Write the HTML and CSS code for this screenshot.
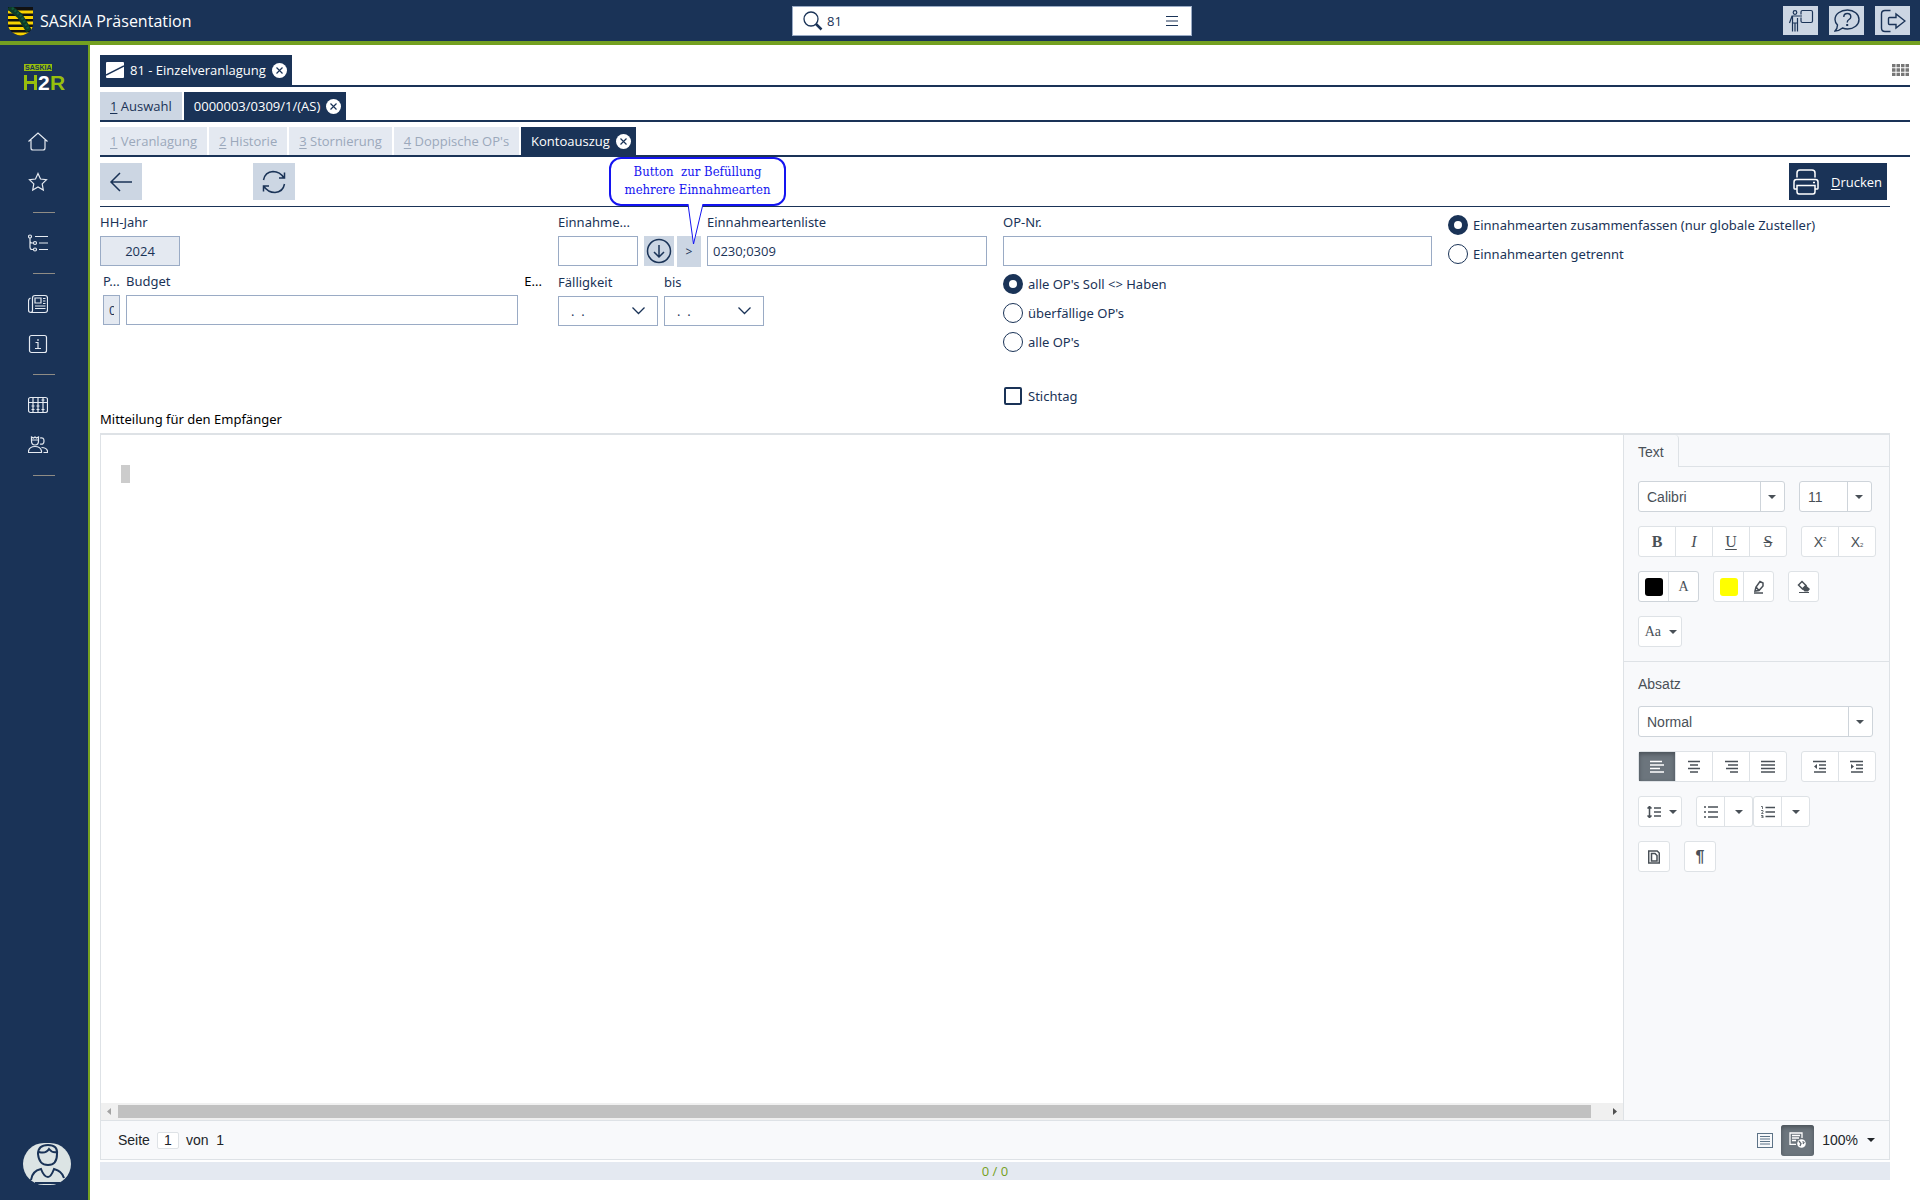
FILE: index.html
```html
<!DOCTYPE html>
<html lang="de">
<head>
    <meta charset="UTF-8">
    <meta name="viewport" content="width=device-width, initial-scale=1.0">
    <title>SASKIA Präsentation</title>
    <link rel="stylesheet" href="styles.css">
</head>
<body>
    <header class="topbar">
        <div class="brand">
            <svg width="25" height="29" viewBox="0 0 25 29">
                <clipPath id="shield"><path d="M0 0h25v17c0 7-6 10-12.500 12C6 27 0 24 0 17z"/></clipPath>
                <g clip-path="url(#shield)">
                    <rect width="25" height="29" fill="#111"/>
                    <path d="M0 5h25M0 10.500h25M0 16h25M0 21.500h25M0 27h25" stroke="#f8d200" stroke-width="2.800"/>
                    <path d="M1 0l11 9 9 15" fill="none" stroke="#0d3a28" stroke-width="6"/>
                    <path d="M4 1l9 8 8 14" fill="none" stroke="#12593a" stroke-width="2.500" stroke-dasharray="2 1.500"/>
                </g>
            </svg>
            <span>SASKIA Präsentation</span>
        </div>
        <form class="search">
            <svg width="20" height="20" viewBox="0 0 20 20" fill="none" stroke="#1a3357">
                <circle cx="8" cy="8" r="7" stroke-width="1.300"/>
                <path d="M13 13l5.500 5.500" stroke-width="2.500"/>
            </svg>
            <input type="text" value="81" aria-label="Suche">
            <button type="button" class="menu" aria-label="Menü">
                <svg width="12" height="12" viewBox="0 0 12 12" stroke="#1a3357"><path d="M0 1.500h12M0 6h12M0 10.500h12"/></svg>
            </button>
        </form>
        <div class="actions">
            <button type="button" aria-label="Präsentation">
                <svg width="26" height="24" viewBox="0 0 26 24" fill="none" stroke="#1a3357" stroke-width="1.200">
                    <circle cx="7" cy="3.500" r="1.800"/>
                    <path d="M1.500 14L4 7h10M4.500 7v15.500M7 14v8.500M9.500 9v13.500M4.500 14h5"/>
                    <path d="M13 5.500V3q0-1.500 1.500-1.500h8.500q1.500 0 1.500 1.500v9q0 1.500-1.500 1.500h-8.500q-1.500 0-1.500-1.500V8.500"/>
                </svg>
            </button>
            <button type="button" aria-label="Hilfe">
                <svg width="26" height="24" viewBox="0 0 26 24" fill="none" stroke="#1a3357" stroke-width="1.400">
                    <path d="M13.500 1C20 1 25 5 25 10.500S20 20 13.500 20q-2.500 0-5-1Q5 22 1 22q2.500-2.500 2.500-6Q1 13.500 1 10.500C1 5 6.500 1 13.500 1z"/>
                    <path d="M9.800 8q0-3.500 3.500-3.500T16.800 8q0 1.500-1.800 2.500t-1.800 3"/>
                    <path d="M13.200 15v2" stroke-width="2"/>
                </svg>
            </button>
            <button type="button" aria-label="Abmelden">
                <svg width="26" height="24" viewBox="0 0 26 24" fill="none" stroke="#1a3357" stroke-width="1.400">
                    <path d="M10.500 1.500H5Q1.500 1.500 1.500 5v14q0 3.500 3.500 3.500h5.500"/>
                    <path d="M9.500 8.500H16V5l9 7-9 7v-3.500H9.500q-1 0-1-1v-5q0-1 1-1z"/>
                </svg>
            </button>
        </div>
    </header>

    <div class="layout">
        <nav class="sidebar">
            <svg class="logo" width="42" height="27" viewBox="0 0 42 27">
                <rect width="28" height="7" fill="#97bf0d"/>
                <text x="1" y="6" class="logo-small">SASKIA</text>
                <path d="M1.500 11v15M1.500 18.500H11M11.500 11v15" stroke="#97bf0d" stroke-width="3" fill="none"/>
                <text x="14" y="26" class="logo-big">2</text>
                <text x="26" y="26" class="logo-big green">R</text>
            </svg>
            <a href="#" aria-label="Start">
                <svg width="20" height="20" viewBox="0 0 20 20"><path d="M.500 9.500L10 1l9.500 8.500M3 8v8q0 2 2 2h10q2 0 2-2V8"/></svg>
            </a>
            <a href="#" aria-label="Favoriten">
                <svg width="20" height="20" viewBox="0 0 20 20"><path d="M10 1.500l2.500 5.500 6 .700-4.300 4.200 1.100 6.100-5.300-3-5.300 3 1.100-6.100L1.500 7.700l6-.700z"/></svg>
            </a>
            <hr>
            <a href="#" aria-label="Baum">
                <svg width="20" height="20" viewBox="0 0 20 20"><circle cx="2" cy="3.500" r="1.500"/><circle cx="7" cy="10" r="1.500"/><circle cx="7" cy="16.500" r="1.500"/><path d="M2 5v9q0 2.500 2 2.500h1.500M2 8q0 2 2 2h1.500M7 3.500h13M11 10h9M11 16.500h9"/></svg>
            </a>
            <hr>
            <a href="#" aria-label="Nachrichten">
                <svg width="20" height="20" viewBox="0 0 20 20"><path d="M4.500 4Q4.500 1.500 7 1.500h10q2.500 0 2.500 2.500v12q0 2.500-2.500 2.500H3Q.500 18.500.500 16V7q0-2 2-3M4.500 4v12.500q0 2-2 2M7 4h6v5H7zM15 4.500h2.500M15 7h2.500M15 9.500h2.500M7 12h10.500M7 14.500h10.500"/></svg>
            </a>
            <a href="#" aria-label="Info">
                <svg width="20" height="20" viewBox="0 0 20 20"><rect x="1.500" y="1.500" width="17" height="17" rx="2"/><path d="M7.500 8.500H10v6M7 14.500h6M10 5v2"/></svg>
            </a>
            <hr>
            <a href="#" aria-label="Tabellen">
                <svg width="20" height="20" viewBox="0 0 20 20"><rect x=".500" y="2.500" width="19" height="15" rx="2"/><path d="M5 2.500v15M10 2.500v15M15 2.500v15M.500 7.500h19M3.500 11h3M8.500 11h3M8.500 14.500h3M13.500 14.500h3M3.500 14.500h3M13.500 5h3"/></svg>
            </a>
            <a href="#" aria-label="Personen">
                <svg width="20" height="20" viewBox="0 0 20 20"><path d="M3.500 2v4q0 4 3.500 4t3.500-4V2L8.500 3 7 2 5.500 3zM3.500 5h7M.500 17.500V16q1-4.500 6.500-4.500T13.500 16v1.500zM12 3q4-1 4 3t-4 3M13.500 12.500q5 0 6 3.500v1.500h-4"/></svg>
            </a>
            <hr>
            <a class="avatar" href="#" aria-label="Benutzer">
                <svg width="48" height="42" viewBox="0 0 48 42">
                    <rect width="48" height="42" rx="21" fill="#dce4e4" stroke="none"/>
                    <g stroke="#1a3357" stroke-width="2">
                        <path d="M15 11q0-9 10-9t9 9q0 11-9 11T15 11zM16 9q7 2 10-3 3 4 8 3M8 37q1-9 10-11 3 8 7 8 3 0 6-8 8 2 10 9M12 40h25"/>
                    </g>
                </svg>
            </a>
        </nav>

        <main class="content">
            <div class="tabs main-tabs">
                <div class="tab active with-icon">
                    <svg width="18" height="16" viewBox="0 0 18 16"><rect width="18" height="16" rx="1" fill="#fff"/><path d="M0 13L18 4" stroke="#1a3357" stroke-width="1.400"/></svg>
                    <span>81 - Einzelveranlagung</span>
                    <button type="button" class="close" aria-label="Schließen"><svg width="15" height="15" viewBox="0 0 15 15"><circle cx="7.500" cy="7.500" r="7.500" fill="#fff"/><path d="M4.500 4.500l6 6M10.500 4.500l-6 6" stroke="#1a3357" stroke-width="1.200"/></svg></button>
                </div>
                <button type="button" class="grid-button" aria-label="Kacheln">
                    <svg width="17" height="12" viewBox="0 0 17 12"><path d="M0 1.500h17M0 6h17M0 10.500h17" stroke="#777" stroke-width="3.400" stroke-dasharray="3.500 1"/></svg>
                </button>
            </div>
            <div class="tabs">
                <a href="#" class="tab"><span><u>1</u> Auswahl</span></a>
                <div class="tab active">
                    <span>0000003/0309/1/(AS)</span>
                    <button type="button" class="close" aria-label="Schließen"><svg width="15" height="15" viewBox="0 0 15 15"><circle cx="7.500" cy="7.500" r="7.500" fill="#fff"/><path d="M4.500 4.500l6 6M10.500 4.500l-6 6" stroke="#1a3357" stroke-width="1.200"/></svg></button>
                </div>
            </div>
            <div class="tabs">
                <a href="#" class="tab disabled"><span><u>1</u> Veranlagung</span></a>
                <a href="#" class="tab disabled"><span><u>2</u> Historie</span></a>
                <a href="#" class="tab disabled"><span><u>3</u> Stornierung</span></a>
                <a href="#" class="tab disabled"><span><u>4</u> Doppische OP's</span></a>
                <div class="tab active">
                    <span>Kontoauszug</span>
                    <button type="button" class="close" aria-label="Schließen"><svg width="15" height="15" viewBox="0 0 15 15"><circle cx="7.500" cy="7.500" r="7.500" fill="#fff"/><path d="M4.500 4.500l6 6M10.500 4.500l-6 6" stroke="#1a3357" stroke-width="1.200"/></svg></button>
                </div>
            </div>

            <div class="page">
                <div class="toolbar">
                    <button type="button" class="tool" aria-label="Zurück">
                        <svg width="24" height="20" viewBox="0 0 24 20" fill="none" stroke="#1a3357" stroke-width="1.500"><path d="M23 10H2M11 1l-9 9 9 9"/></svg>
                    </button>
                    <button type="button" class="tool refresh" aria-label="Aktualisieren">
                        <svg width="24" height="24" viewBox="0 0 24 24" fill="none" stroke="#1a3357" stroke-width="1.500"><path d="M1.500 10Q3 2 11 1.500q7 0 11 6.500M22.500 2.500V8H17M22.500 14Q21 22 13 22.500 6 22.500 1.500 16M1.500 21.500V16H7"/></svg>
                    </button>
                    <button type="button" class="print">
                        <svg width="26" height="26" viewBox="0 0 26 26" fill="none" stroke="#fff" stroke-width="1.500"><path d="M4 8.500V4q0-3 3-3h12q3 0 3 3v4.500M4 20H1.500q-.500 0-.500-1v-6q0-2.500 2.500-2.500h19q2.500 0 2.500 2.500v6q0 1-.500 1H22M4 16.500h18v6q0 2.500-2 2.500H6q-2 0-2-2.500zM20 13.500h2"/></svg>
                        <span><u>D</u>rucken</span>
                    </button>
                </div>

                <form class="filters">
                    <div class="column">
                        <div class="field year">
                            <label for="hhjahr">HH-Jahr</label>
                            <input type="text" id="hhjahr" value="2024" readonly>
                        </div>
                        <div class="row budget-row">
                            <div class="field plan">
                                <label for="plan">P...</label>
                                <input type="text" id="plan" value="0" readonly>
                            </div>
                            <div class="field grow">
                                <label for="budget">Budget</label>
                                <input type="text" id="budget">
                            </div>
                            <span class="dark">E...</span>
                        </div>
                    </div>

                    <div class="column">
                        <div class="row">
                            <div class="field short">
                                <label for="einnahmeart">Einnahme...</label>
                                <input type="text" id="einnahmeart">
                            </div>
                            <div class="picker">
                                <button type="button" class="lookup" aria-label="Auswählen">
                                    <svg width="26" height="26" viewBox="0 0 26 26" fill="none" stroke="#1a3357" stroke-width="1.500"><circle cx="13" cy="13" r="11.500"/><path d="M13 7v12M8 14l5 5 5-5"/></svg>
                                </button>
                                <button type="button" class="more">&gt;</button>
                                <div class="callout">
                                    <p>Button&nbsp; zur Befüllung<br>mehrere Einnahmearten</p>
                                    <svg width="24" height="42" viewBox="0 0 24 42"><path d="M4 0l5.500 40L19 0" fill="#fff" stroke="#1414f0" stroke-width="1"/></svg>
                                </div>
                            </div>
                            <div class="field grow">
                                <label for="liste">Einnahmeartenliste</label>
                                <input type="text" id="liste" value="0230;0309">
                            </div>
                        </div>
                        <div class="row">
                            <div class="field">
                                <label for="faellig">Fälligkeit</label>
                                <div class="date">
                                    <select id="faellig"><option>.&nbsp; .</option></select>
                                    <svg width="13" height="8" viewBox="0 0 13 8"><path d="M.500.500l6 6 6-6"/></svg>
                                </div>
                            </div>
                            <div class="field">
                                <label for="bis">bis</label>
                                <div class="date">
                                    <select id="bis"><option>.&nbsp; .</option></select>
                                    <svg width="13" height="8" viewBox="0 0 13 8"><path d="M.500.500l6 6 6-6"/></svg>
                                </div>
                            </div>
                        </div>
                    </div>

                    <div class="column">
                        <div class="field">
                            <label for="opnr">OP-Nr.</label>
                            <input type="text" id="opnr">
                        </div>
                        <div class="choices">
                            <label><input type="radio" name="op" checked> alle OP's Soll &lt;&gt; Haben</label>
                            <label><input type="radio" name="op"> überfällige OP's</label>
                            <label><input type="radio" name="op"> alle OP's</label>
                        </div>
                        <div class="choices keydate">
                            <label><input type="checkbox"> Stichtag</label>
                        </div>
                    </div>

                    <div class="column">
                        <div class="choices">
                            <label><input type="radio" name="art" checked> Einnahmearten zusammenfassen (nur globale Zusteller)</label>
                            <label><input type="radio" name="art"> Einnahmearten getrennt</label>
                        </div>
                    </div>
                </form>

                <div class="message-title" id="mitteilung">Mitteilung für den Empfänger</div>

                <section class="editor">
                    <div class="workspace">
                        <div class="document">
                            <div class="paper" role="textbox" aria-labelledby="mitteilung"><span class="caret"></span></div>
                            <div class="scrollbar">
                                <svg width="17" height="17" viewBox="0 0 17 17"><path d="M10 5v7L6 8.500z" fill="#a3a3a3"/></svg>
                                <div class="track"><div class="thumb"></div></div>
                                <svg width="17" height="17" viewBox="0 0 17 17"><path d="M7 5v7l4-3.500z" fill="#505050"/></svg>
                            </div>
                        </div>

                        <aside class="panel">
                            <div class="panel-tabs"><a href="#">Text</a></div>
                            <div class="panel-body">
                                <div class="line">
                                    <div class="combo font">
                                        <select aria-label="Schriftart"><option>Calibri</option></select>
                                        <i class="arrow"></i>
                                    </div>
                                    <div class="combo size">
                                        <select aria-label="Schriftgröße"><option>11</option></select>
                                        <i class="arrow"></i>
                                    </div>
                                </div>
                                <div class="line">
                                    <div class="group">
                                        <button type="button" class="serif bold">B</button>
                                        <button type="button" class="serif italic">I</button>
                                        <button type="button" class="serif underline">U</button>
                                        <button type="button" class="serif strike">S</button>
                                    </div>
                                    <div class="group">
                                        <button type="button">X<sup>2</sup></button>
                                        <button type="button">X<sub>2</sub></button>
                                    </div>
                                </div>
                                <div class="line">
                                    <div class="group small dark-border">
                                        <button type="button" aria-label="Schriftfarbe"><span class="swatch black"></span></button>
                                        <button type="button" class="serif letter">A</button>
                                    </div>
                                    <div class="group small">
                                        <button type="button" aria-label="Markierungsfarbe"><span class="swatch yellow"></span></button>
                                        <button type="button" aria-label="Markieren">
                                            <svg width="12" height="14" viewBox="0 0 12 14"><path d="M2 11l1-4 4-5.500 3 1.500v3l-4 4.500zM3 7l3 3.500M1 13h9"/></svg>
                                        </button>
                                    </div>
                                    <div class="group small">
                                        <button type="button" aria-label="Format löschen">
                                            <svg width="14" height="14" viewBox="0 0 14 14"><path d="M1.500 5l3.500-3.500 4 4L5.500 9z"/><path class="filled" d="M8.500 5l4.500 4-2 2.500H7.500L5 8.500zM2 12h10v1H2z"/></svg>
                                        </button>
                                    </div>
                                </div>
                                <div class="line">
                                    <div class="group wide"><button type="button" class="letter serif">Aa <i class="arrow"></i></button></div>
                                </div>
                            </div>
                            <div class="panel-body">
                                <h2>Absatz</h2>
                                <div class="line">
                                    <div class="combo style">
                                        <select aria-label="Formatvorlage"><option>Normal</option></select>
                                        <i class="arrow"></i>
                                    </div>
                                </div>
                                <div class="line">
                                    <div class="group">
                                        <button type="button" class="pressed" aria-label="Linksbündig"><svg width="14" height="13" viewBox="0 0 14 13"><path d="M0 1.500h12M0 5h14M0 8.500h10M0 12h14"/></svg></button>
                                        <button type="button" aria-label="Zentriert"><svg width="14" height="13" viewBox="0 0 14 13"><path d="M1 1.500h12M3 5h8M1 8.500h12M3 12h8"/></svg></button>
                                        <button type="button" aria-label="Rechtsbündig"><svg width="14" height="13" viewBox="0 0 14 13"><path d="M1 1.500h13M4 5h10M2 8.500h12M6 12h8"/></svg></button>
                                        <button type="button" aria-label="Blocksatz"><svg width="14" height="13" viewBox="0 0 14 13"><path d="M0 1.500h14M0 5h14M0 8.500h14M0 12h14"/></svg></button>
                                    </div>
                                    <div class="group">
                                        <button type="button" aria-label="Einzug verkleinern"><svg width="14" height="13" viewBox="0 0 14 13"><path d="M0 1.500h13M6 5h7M6 8.500h7M1 12h12"/><path class="filled" d="M4 4v5L1 6.500z"/></svg></button>
                                        <button type="button" aria-label="Einzug vergrößern"><svg width="14" height="13" viewBox="0 0 14 13"><path d="M0 1.500h13M6 5h7M6 8.500h7M1 12h12"/><path class="filled" d="M1 4v5l3-2.500z"/></svg></button>
                                    </div>
                                </div>
                                <div class="line">
                                    <div class="group wide"><button type="button" aria-label="Zeilenabstand"><svg width="14" height="12" viewBox="0 0 14 12"><path d="M2.500 0v12M.500 2.500l2-2 2 2M.500 9.500l2 2 2-2M7 2h7M7 6h7M7 10h7"/></svg> <i class="arrow"></i></button></div>
                                    <div class="lists">
                                        <div class="group split">
                                            <button type="button" aria-label="Aufzählung"><svg width="14" height="12" viewBox="0 0 14 12"><path d="M0 1h2M0 6h2M0 11h2M4 1h10M4 6h10M4 11h10"/></svg></button>
                                            <button type="button" aria-label="Aufzählungszeichen"><i class="arrow"></i></button>
                                        </div>
                                        <div class="group split">
                                            <button type="button" aria-label="Nummerierung"><svg width="14" height="12" viewBox="0 0 14 12"><path d="M4.500 1.500H14M4.500 6H14M4.500 10.500H14"/><path d="M0 .500h1.500v2.500M0 4.500h2v1.200L.500 7.500H2.500M0 9.500h2v2.500H0M.500 10.800H2" stroke-width=".8"/></svg></button>
                                            <button type="button" aria-label="Nummerierungsart"><i class="arrow"></i></button>
                                        </div>
                                    </div>
                                </div>
                                <div class="line">
                                    <div class="group single"><button type="button" aria-label="Rahmen"><svg width="12" height="14" viewBox="0 0 12 14"><path d="M.700 1h8.500L11.300 3v10H.700zM3.500 3.500h3.500l2 2v5.500H3.500z"/></svg></button></div>
                                    <div class="group single"><button type="button" class="pilcrow">¶</button></div>
                                </div>
                            </div>
                        </aside>
                    </div>

                    <div class="status">
                        <label for="seite">Seite</label>
                        <input type="text" id="seite" value="1">
                        <span>von&nbsp; 1</span>
                        <div class="view">
                            <button type="button" class="plain" aria-label="Seitenlayout">
                                <svg width="16" height="15" viewBox="0 0 16 15" fill="none" stroke="#5d7387"><rect x=".500" y=".500" width="15" height="14"/><path d="M3 3.500h10M3 6h10M3 8.500h10M3 11h10"/></svg>
                            </button>
                            <button type="button" class="web" aria-label="Weblayout">
                                <svg width="18" height="17" viewBox="0 0 18 17" fill="none" stroke="#fff" stroke-width="1.300"><path d="M7 12.300H1V1h12v5M3 3.500h8M3 6h7M3 8.500h4"/><circle cx="12.500" cy="11.500" r="4.300" fill="#fff" stroke="none"/><path d="M10 9l2 2.500-1 2.500M13.500 9.500l1.500 1-1 1.500" stroke="#626a72"/></svg>
                            </button>
                            <button type="button" class="zoom">100% <i class="arrow"></i></button>
                        </div>
                    </div>
                </section>

                <div class="counter">0 / 0</div>
            </div>
        </main>
    </div>
</body>
</html>
```

FILE: styles.css
```css
* {
    margin: 0;
    padding: 0;
    box-sizing: border-box;
}

body {
    display: flex;
    flex-direction: column;
    min-height: 100vh;
    background-color: #fff;
    color: #1a3357;
    font-family: "Open Sans", "Noto Sans", sans-serif;
    font-size: 13px;
}

button, input, select {
    font: inherit;
    color: inherit;
    border: 0;
    border-radius: 0;
    background: none;
}

button, label, a {
    white-space: nowrap;
}

a {
    color: inherit;
    text-decoration: none;
}

svg {
    display: block;
    flex: none;
}

u {
    text-underline-offset: 2px;
}

/* Kopfzeile */
.topbar {
    display: grid;
    grid-template-columns: 792fr 400px 728fr;
    align-items: start;
    padding-top: 6px;
    height: 45px;
    background: #1a3357;
    border-bottom: 4px solid #74a021;
}

.brand {
    display: flex;
    align-items: center;
    gap: 7px;
    padding-left: 8px;
    height: 30px;
    color: #fff;
    font-size: 16px;
}

.search {
    display: flex;
    align-items: center;
    height: 30px;
    padding: 0 13px 0 10px;
    background: #fff;
    border: 1px solid #9aabc5;
}

.search input {
    flex: 1;
    min-width: 0;
    padding: 0 4px;
}

.menu {
    width: 12px;
}

.actions {
    display: flex;
    justify-content: flex-end;
    gap: 11px;
    padding-right: 10px;
}

.actions button {
    display: flex;
    align-items: center;
    justify-content: center;
    width: 35px;
    height: 29px;
    background: #ccd6e3;
}

.layout {
    display: flex;
    flex: 1;
}

/* Seitenleiste */
.sidebar {
    display: flex;
    flex-direction: column;
    flex: 0 0 90px;
    padding-bottom: 15px;
    background: #1a3357;
    border-right: 2px solid #74a021;
}

.logo {
    margin: 19px 0 31px 24px;
    overflow: visible;
    font-family: "Liberation Sans", Arial, sans-serif;
    font-weight: 700;
}

.logo-small {
    font-size: 7px;
    fill: #1a3357;
}

.logo-big {
    font-size: 21px;
    fill: #fff;
}

.logo-big.green {
    fill: #97bf0d;
}

.sidebar a {
    display: flex;
    align-items: center;
    height: 40px;
    padding-left: 28px;
}

.sidebar a svg {
    fill: none;
    stroke: #e6ebf2;
    stroke-width: 1.2;
}

.sidebar hr {
    width: 22px;
    margin: 10px 33px;
    border: 0;
    border-top: 1px solid #8f8c85;
}

.sidebar .avatar {
    margin-top: auto;
    padding-left: 23px;
    height: 42px;
}

.content {
    display: flex;
    flex-direction: column;
    flex: 1;
    min-width: 0;
    padding: 5px 10px 20px;
}

/* Reiter */
.tabs {
    display: flex;
    align-items: flex-end;
    gap: 2px;
    margin-top: 5px;
    border-bottom: 2px solid #1a3357;
}

.tab {
    display: flex;
    align-items: center;
    gap: 6px;
    height: 28px;
    padding: 0 10px;
    background: #ccd6e3;
}

.tab.active {
    padding-right: 5px;
    background: #1a3357;
    color: #fff;
}

.tab.disabled {
    background: #e4e9f1;
    color: #9ba8bb;
}

.main-tabs .tab {
    height: 30px;
}

.tab.with-icon {
    padding-left: 6px;
}

.grid-button {
    align-self: center;
    margin-left: auto;
    padding-right: 1px;
}

.page {
    display: flex;
    flex-direction: column;
    flex: 1;
    padding-right: 20px;
}

.toolbar {
    display: flex;
    padding: 6px 3px 6px 0;
    border-bottom: 1px solid #1a3357;
}

.tool {
    display: flex;
    align-items: center;
    justify-content: center;
    width: 42px;
    height: 37px;
    background: #ccd6e3;
}

.refresh {
    margin-left: 111px;
}

.print {
    display: flex;
    align-items: center;
    gap: 12px;
    margin-left: auto;
    padding: 0 5px 0 4px;
    background: #1a3357;
    color: #fff;
}

/* Filter */
.filters {
    display: grid;
    grid-template-columns: 442fr 429fr 429fr 442fr;
    gap: 16px;
    padding-top: 4px;
}

.filters label, .dark, .message-title {
    font-family: "Noto Sans", "Open Sans", sans-serif;
}

.column {
    display: flex;
    flex-direction: column;
    gap: 4px;
    min-width: 0;
}

.row {
    display: flex;
    gap: 6px;
}

.field {
    display: flex;
    flex-direction: column;
    gap: 3px;
    line-height: 22px;
}

.field input {
    width: 100%;
    height: 30px;
    padding: 0 5px;
    border: 1px solid #9aabc5;
    background: #fff;
}

.field input[readonly] {
    background: #e4e9f1;
    text-align: center;
}

.year, .short {
    width: 80px;
}

.budget-row {
    padding-left: 3px;
    line-height: 22px;
}

.plan {
    width: 17px;
}

.grow {
    flex: 1;
}

.dark, .message-title {
    color: #000;
}

.dark {
    flex: 0 0 16px;
}

.picker {
    position: relative;
    display: flex;
    align-items: flex-start;
    gap: 3px;
    padding-top: 25px;
}

.picker button {
    background: #ccd6e3;
}

.lookup {
    width: 30px;
    height: 30px;
    padding: 2px;
}

.more {
    width: 24px;
    height: 31px;
    font-size: 12px;
}

.callout {
    position: absolute;
    top: -54px;
    left: -35px;
    width: 177px;
    color: #1414f0;
    font-family: "DejaVu Serif Condensed", "DejaVu Serif", serif;
    line-height: 18px;
    text-align: center;
}

.callout p {
    padding: 4px 0 5px;
    border: 2px solid #1414f0;
    border-radius: 12px;
    background: #fff;
    white-space: nowrap;
}

.callout svg {
    margin: -2px 0 0 75px;
}

.date {
    display: grid;
    align-items: center;
    width: 100px;
}

.date select, .date svg {
    grid-area: 1 / 1;
}

.date select {
    height: 30px;
    padding-left: 12px;
    border: 1px solid #9aabc5;
    appearance: none;
}

.date svg {
    justify-self: end;
    margin-right: 13px;
    fill: none;
    stroke: #1a3357;
    stroke-width: 1.3;
    pointer-events: none;
}

.choices {
    display: flex;
    flex-direction: column;
    gap: 9px;
    margin-top: 4px;
}

.choices label {
    display: flex;
    align-items: center;
    gap: 5px;
    height: 20px;
}

.choices input {
    width: 20px;
    height: 20px;
    border: 1px solid #1a3357;
    border-radius: 50%;
    appearance: none;
}

.choices input:checked {
    border-width: 6px;
}

.choices.keydate {
    margin-top: 30px;
}

.choices input[type="checkbox"] {
    width: 18px;
    height: 18px;
    margin: 0 1px;
    border: 2px solid #1a3357;
    border-radius: 2px;
}

.message-title {
    padding: 2px 0 3px;
    line-height: 22px;
}

/* Texteditor */
.editor {
    display: flex;
    flex-direction: column;
    flex: 1;
    border: 1px solid #dee2e6;
    border-top-width: 2px;
    color: #495057;
    font-family: "Liberation Sans", Arial, sans-serif;
    font-size: 14px;
}

.workspace {
    display: flex;
    flex: 1;
}

.document {
    display: flex;
    flex-direction: column;
    flex: 1;
}

.paper {
    flex: 1;
    padding: 30px 20px;
}

.caret {
    display: block;
    width: 9px;
    height: 18px;
    background: #ccc;
}

.scrollbar {
    display: flex;
    height: 17px;
    background: #f0f0f0;
}

.track {
    flex: 1;
    padding: 2px 0;
}

.thumb {
    width: 99%;
    height: 13px;
    background: #c1c1c1;
}

.panel {
    flex: 0 0 266px;
    background: #f8f9fb;
    border-left: 1px solid #dee2e6;
}

.panel-tabs {
    display: flex;
    height: 32px;
    border-bottom: 1px solid #dee2e6;
}

.panel-tabs a {
    height: 32px;
    padding: 0 14px;
    background: #f8f9fb;
    border-right: 1px solid #dee2e6;
    border-radius: 0 4px 0 0;
    line-height: 34px;
}

.panel-body {
    display: flex;
    flex-direction: column;
    gap: 14px;
    padding: 14px 12px 14px 14px;
}

.panel-body + .panel-body {
    border-top: 1px solid #dee2e6;
}

.panel h2 {
    font-size: 14px;
    font-weight: 400;
    line-height: 16px;
}

.line {
    display: flex;
    gap: 14px;
}

.lists {
    display: flex;
}

.combo {
    display: grid;
    align-items: center;
    height: 31px;
    border: 1px solid #ced4da;
    border-radius: 3px;
    background: #fff;
}

.combo select, .combo .arrow {
    grid-area: 1 / 1;
}

.combo select {
    height: 29px;
    padding-left: 8px;
    appearance: none;
    background: linear-gradient(#ced4da, #ced4da) right 23px top / 1px 100% no-repeat;
}

.combo .arrow {
    justify-self: end;
    margin-right: 8px;
    pointer-events: none;
}

.font {
    width: 147px;
}

.size {
    width: 73px;
}

.style {
    width: 235px;
}

.arrow {
    display: inline-block;
    border: 4px solid transparent;
    border-top-color: currentColor;
    border-bottom: 0;
}

.group {
    display: flex;
    height: 31px;
    border: 1px solid #dee2e6;
    border-radius: 3px;
    background: #fff;
}

.group button {
    display: flex;
    align-items: center;
    justify-content: center;
    gap: 8px;
    width: 36px;
}

.group button + button {
    box-sizing: content-box;
    border-left: 1px solid #dee2e6;
}

.group svg {
    fill: none;
    stroke: #495057;
    stroke-width: 1.5;
}

.group .filled {
    fill: #495057;
    stroke: none;
}

.dark-border {
    border-color: #ced4da;
}

.small button {
    width: 29px;
}

.split button {
    width: 27px;
}

.single button {
    width: 30px;
}

.wide button {
    justify-content: flex-end;
    width: 42px;
    padding-right: 4px;
}

.group .pressed {
    background: #6c757d;
    box-shadow: inset 0 2px 4px #495057;
}

.group .pressed svg {
    stroke: #fff;
}

.serif {
    font-family: "Liberation Serif", serif;
    font-size: 16px;
}

.group .letter {
    font-size: 14px;
}

.bold {
    font-weight: 700;
}

.italic {
    font-style: italic;
}

.underline {
    text-decoration: underline;
    text-underline-offset: 2px;
}

.strike {
    text-decoration: line-through;
}

.group sup, .group sub {
    margin-left: -8px;
    font-size: 6px;
}

.group sup {
    padding-bottom: 6px;
}

.group sub {
    padding-top: 6px;
}

.pilcrow {
    font-size: 16px;
    font-weight: 700;
}

.swatch {
    width: 18px;
    height: 18px;
    border-radius: 3px;
}

.black {
    background: #000;
}

.yellow {
    background: #ff0;
}

.status {
    display: flex;
    align-items: center;
    gap: 7px;
    height: 39px;
    padding: 0 12px 0 17px;
    background: #f8f9fb;
    border-top: 1px solid #dee2e6;
    color: #212529;
}

.status input {
    width: 22px;
    height: 17px;
    border: 1px solid #dee2e6;
    border-radius: 2px;
    background: #fff;
    text-align: center;
}

.view {
    display: flex;
    align-items: center;
    gap: 8px;
    margin-left: auto;
}

.web {
    padding: 7px 7px 7px 8px;
    border-radius: 3px;
    background: #6c757d;
    box-shadow: inset 0 2px 4px #495057;
}

.zoom {
    display: flex;
    align-items: center;
    gap: 9px;
    padding-right: 2px;
}

.counter {
    margin-top: 2px;
    background: #e4e9f1;
    color: #74a021;
    line-height: 18px;
    text-align: center;
}
```
